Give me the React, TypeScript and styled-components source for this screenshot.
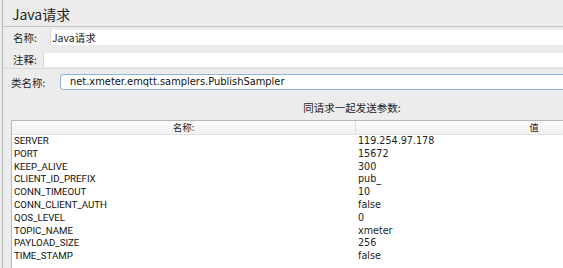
import { createGlobalStyle, styled } from "styled-components"

const Global = createGlobalStyle`
  html, body {
    margin: 0;
    padding: 0;
    background: #ececec;
    overflow: hidden;
  }
`

const Page = styled.div`
  width: 563px;
  height: 268px;
  overflow: hidden;
  background: #ececec;
  padding-left: 2px;
  box-sizing: border-box;
`

const Frame = styled.div`
  width: 720px;
  height: 268px;
  border-left: 1px solid #b4b4b4;
  display: flex;
  flex-direction: column;
  font-family: "Noto Sans CJK SC", sans-serif;
  color: #1e1e1e;
`

const Title = styled.div`
  height: 27px;
  box-sizing: border-box;
  padding: 5px 0 0 9px;
  font-size: 14px;
  line-height: 18px;
  border-bottom: 1px solid #c2c2c2;
`

const NameBox = styled.div`
  display: flex;
  flex-direction: column;
  gap: 7px;
  padding: 3px 0 1px;
  border-bottom: 1px solid #dcdcdc;
`

const Row = styled.div`
  display: flex;
  align-items: center;
`

const Label = styled.span<{ $w: number; $pad?: number }>`
  width: ${(p) => p.$w}px;
  padding-left: ${(p) => p.$pad ?? 10}px;
  box-sizing: border-box;
  font-size: 10.5px;
  flex: none;
`

const Field = styled.div<{ $h: number }>`
  flex: 1;
  height: ${(p) => p.$h}px;
  background: #fff;
  border-left: 1px solid #d6d6d6;
  box-sizing: border-box;
  padding-left: 1px;
  font-size: 10.5px;
  line-height: ${(p) => p.$h}px;
`

const ClassRow = styled.div`
  display: flex;
  align-items: center;
  margin-top: 5px;
`

const ClassInput = styled.div`
  flex: 1;
  height: 16px;
  box-sizing: border-box;
  background: #fff;
  border: 1px solid #8db4e8;
  border-right: none;
  border-radius: 4px 0 0 4px;
  padding-left: 9px;
  font-family: "DejaVu Sans", sans-serif;
  font-size: 9.9px;
  line-height: 14px;
  color: #111;
`

const Caption = styled.div`
  width: 698px;
  text-align: center;
  margin-top: 11px;
  font-size: 10.5px;
  line-height: 14px;
`

const Table = styled.div`
  margin: 5px 0 0 8px;
  width: 700px;
  flex: 1;
  background: #fff;
  border: 1px solid #b8b8b8;
  border-bottom: none;
`

const Head = styled.div`
  display: grid;
  grid-template-columns: 344px 1fr;
  height: 13px;
  background: linear-gradient(#fbfbfb, #f1f1f1);
  border-bottom: 1px solid #e2e2e2;
  font-size: 9.5px;
  line-height: 13px;
`

const HeadCell = styled.div<{ $divider?: boolean }>`
  text-align: center;
  border-right: ${(p) => (p.$divider ? "1px solid #dedede" : "none")};
`

const DataRow = styled.div`
  display: grid;
  grid-template-columns: 344px 1fr;
  height: 12.8px;
  line-height: 12.8px;
  color: #111;
`

const NameCell = styled.div`
  padding-left: 2px;
  font-family: Roboto, sans-serif;
  font-size: 9.7px;
`

const ValueCell = styled.div`
  padding-left: 2px;
  font-family: "DejaVu Sans", sans-serif;
  font-size: 9.6px;
  color: #222;
`

const params: [string, string][] = [
  ["SERVER", "119.254.97.178"],
  ["PORT", "15672"],
  ["KEEP_ALIVE", "300"],
  ["CLIENT_ID_PREFIX", "pub_"],
  ["CONN_TIMEOUT", "10"],
  ["CONN_CLIENT_AUTH", "false"],
  ["QOS_LEVEL", "0"],
  ["TOPIC_NAME", "xmeter"],
  ["PAYLOAD_SIZE", "256"],
  ["TIME_STAMP", "false"],
]

function App() {
  return (
    <Page>
      <Global />
      <Frame>
        <Title>Java请求</Title>
        <NameBox>
          <Row>
            <Label $w={47}>名称:</Label>
            <Field $h={15}>Java请求</Field>
          </Row>
          <Row>
            <Label $w={40}>注释:</Label>
            <Field $h={14} />
          </Row>
        </NameBox>
        <ClassRow>
          <Label $w={57} $pad={8}>类名称:</Label>
          <ClassInput>net.xmeter.emqtt.samplers.PublishSampler</ClassInput>
        </ClassRow>
        <Caption>同请求一起发送参数:</Caption>
        <Table>
          <Head>
            <HeadCell $divider>名称:</HeadCell>
            <HeadCell>值</HeadCell>
          </Head>
          {params.map(([k, v]) => (
            <DataRow key={k}>
              <NameCell>{k}</NameCell>
              <ValueCell>{v}</ValueCell>
            </DataRow>
          ))}
        </Table>
      </Frame>
    </Page>
  )
}

export default App
